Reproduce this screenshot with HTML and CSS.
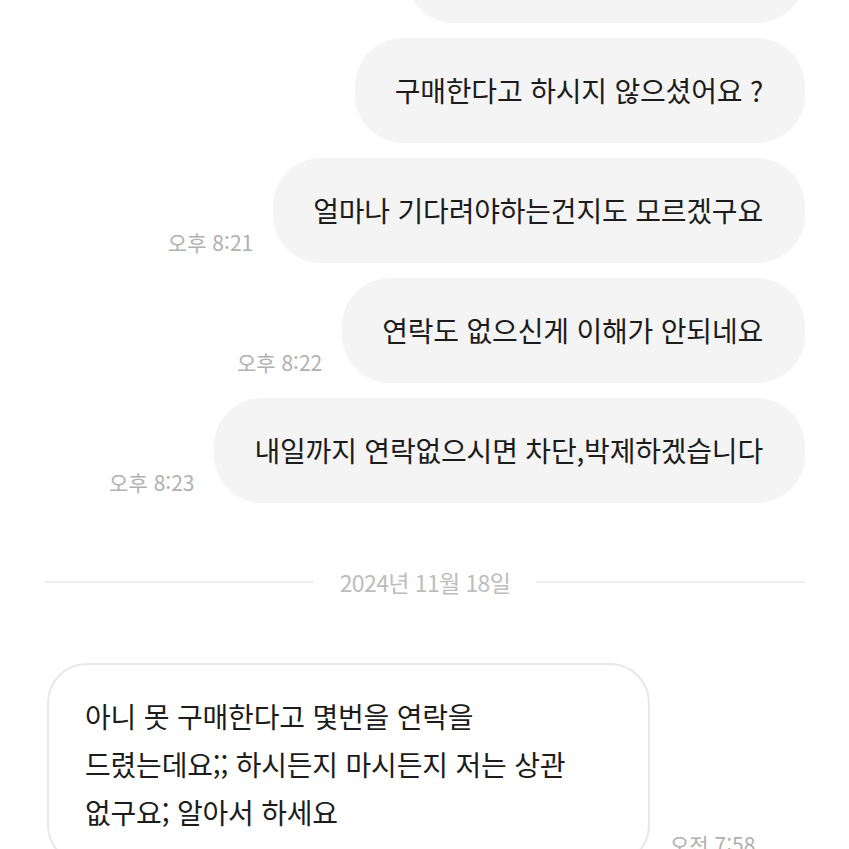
FILE: index.html
```html
<!DOCTYPE html>
<html lang="ko">
<head>
<meta charset="utf-8">
<title>채팅</title>
<link rel="stylesheet" href="styles.css">
</head>
<body>
<main class="chat">
  <div class="row sent first">
    <div class="bubble">혹시 구매 안하시는건가요 ?</div>
  </div>
  <div class="row sent">
    <div class="bubble">구매한다고 하시지 않으셨어요 ?</div>
  </div>
  <div class="row sent">
    <span class="time">오후 8:21</span>
    <div class="bubble">얼마나 기다려야하는건지도 모르겠구요</div>
  </div>
  <div class="row sent">
    <span class="time">오후 8:22</span>
    <div class="bubble">연락도 없으신게 이해가 안되네요</div>
  </div>
  <div class="row sent">
    <span class="time">오후 8:23</span>
    <div class="bubble">내일까지 연락없으시면 차단,박제하겠습니다</div>
  </div>

  <div class="divider">
    <span class="line"></span>
    <span class="date">2024년 11월 18일</span>
    <span class="line"></span>
  </div>

  <div class="row received">
    <div class="bubble">아니 못 구매한다고 몇번을 연락을 드렸는데요;; 하시든지 마시든지 저는 상관 없구요; 알아서 하세요</div>
    <span class="time">오전 7:58</span>
  </div>
</main>
</body>
</html>
```

FILE: styles.css
```css
html, body {
  margin: 0;
  padding: 0;
  background: #ffffff;
}

body {
  width: 849px;
  height: 849px;
  overflow: hidden;
  font-family: "Noto Sans CJK KR", "Noto Sans", sans-serif;
  color: #1c1c1c;
}

.chat {
  display: flex;
  flex-direction: column;
  padding: 0 44px 0 45px;
}

.row {
  display: flex;
  align-items: flex-end;
  gap: 20px;
}

.row + .row {
  margin-top: 15px;
}

.row.first {
  margin-top: -82px;
}

.row.sent {
  justify-content: flex-end;
}

.bubble {
  font-size: 28px;
  line-height: 39px;
  letter-spacing: -0.2px;
  white-space: nowrap;
}

.sent .bubble {
  background: #f4f4f4;
  border-radius: 48px;
  padding: 33px 42px 33px 40px;
}

.time {
  font-size: 21px;
  line-height: 26px;
  color: #b0b0b0;
  margin-bottom: 8px;
  white-space: nowrap;
  flex-shrink: 0;
}

.divider {
  display: flex;
  align-items: center;
  gap: 26px;
  margin-top: 64px;
  height: 30px;
}

.divider .line {
  flex: 1;
  height: 2px;
  background: #ececec;
}

.divider .date {
  font-size: 23px;
  line-height: 30px;
  color: #bdbdbd;
  letter-spacing: -0.6px;
}

.row.received {
  margin-top: 66px;
  justify-content: flex-start;
  padding-left: 2px;
}

.received .bubble {
  box-sizing: border-box;
  width: 603px;
  white-space: normal;
  word-break: keep-all;
  background: #ffffff;
  border: 2px solid #e8e8e8;
  border-radius: 40px;
  padding: 27px 36px 27px 36px;
  line-height: 48px;
}
```
